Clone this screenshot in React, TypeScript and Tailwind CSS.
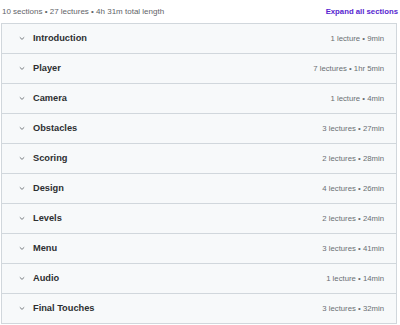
const sections = [
  { title: "Introduction", meta: "1 lecture • 9min" },
  { title: "Player", meta: "7 lectures • 1hr 5min" },
  { title: "Camera", meta: "1 lecture • 4min" },
  { title: "Obstacles", meta: "3 lectures • 27min" },
  { title: "Scoring", meta: "2 lectures • 28min" },
  { title: "Design", meta: "4 lectures • 26min" },
  { title: "Levels", meta: "2 lectures • 24min" },
  { title: "Menu", meta: "3 lectures • 41min" },
  { title: "Audio", meta: "1 lecture • 14min" },
  { title: "Final Touches", meta: "3 lectures • 32min" },
];

function Chevron() {
  return (
    <svg width="6" height="5" viewBox="0 0 6 5" fill="none" className="shrink-0">
      <path d="M0.8 1.3 L3 3.4 L5.2 1.3" stroke="#6a6f73" strokeWidth="0.9" />
    </svg>
  );
}

export default function App() {
  return (
    <div className="w-[400px] h-[325px] bg-white font-['Liberation_Sans',Arial,sans-serif] overflow-hidden">
      {/* summary */}
      <div className="flex h-[23px] items-center justify-between px-[2px] pt-[1px]">
        <span className="text-[8px] text-[#5f6468]">10 sections • 27 lectures • 4h 31m total length</span>
        <span className="text-[7.75px] font-bold text-[#5624d0]">Expand all sections</span>
      </div>

      {/* sections */}
      <div className="ml-[1px] w-[396px] border-b border-[#d1d7dc]">
        {sections.map((s) => (
          <div
            key={s.title}
            className="flex h-[30px] items-center border-x border-t border-[#d1d7dc] bg-[#f7f9fa] pl-[17px] pr-[12px]"
          >
            <Chevron />
            <span className="ml-[8px] text-[9.25px] font-bold text-[#2d2f31]">{s.title}</span>
            <span className="ml-auto text-[7.75px] text-[#6a6f73]">{s.meta}</span>
          </div>
        ))}
      </div>
    </div>
  );
}
